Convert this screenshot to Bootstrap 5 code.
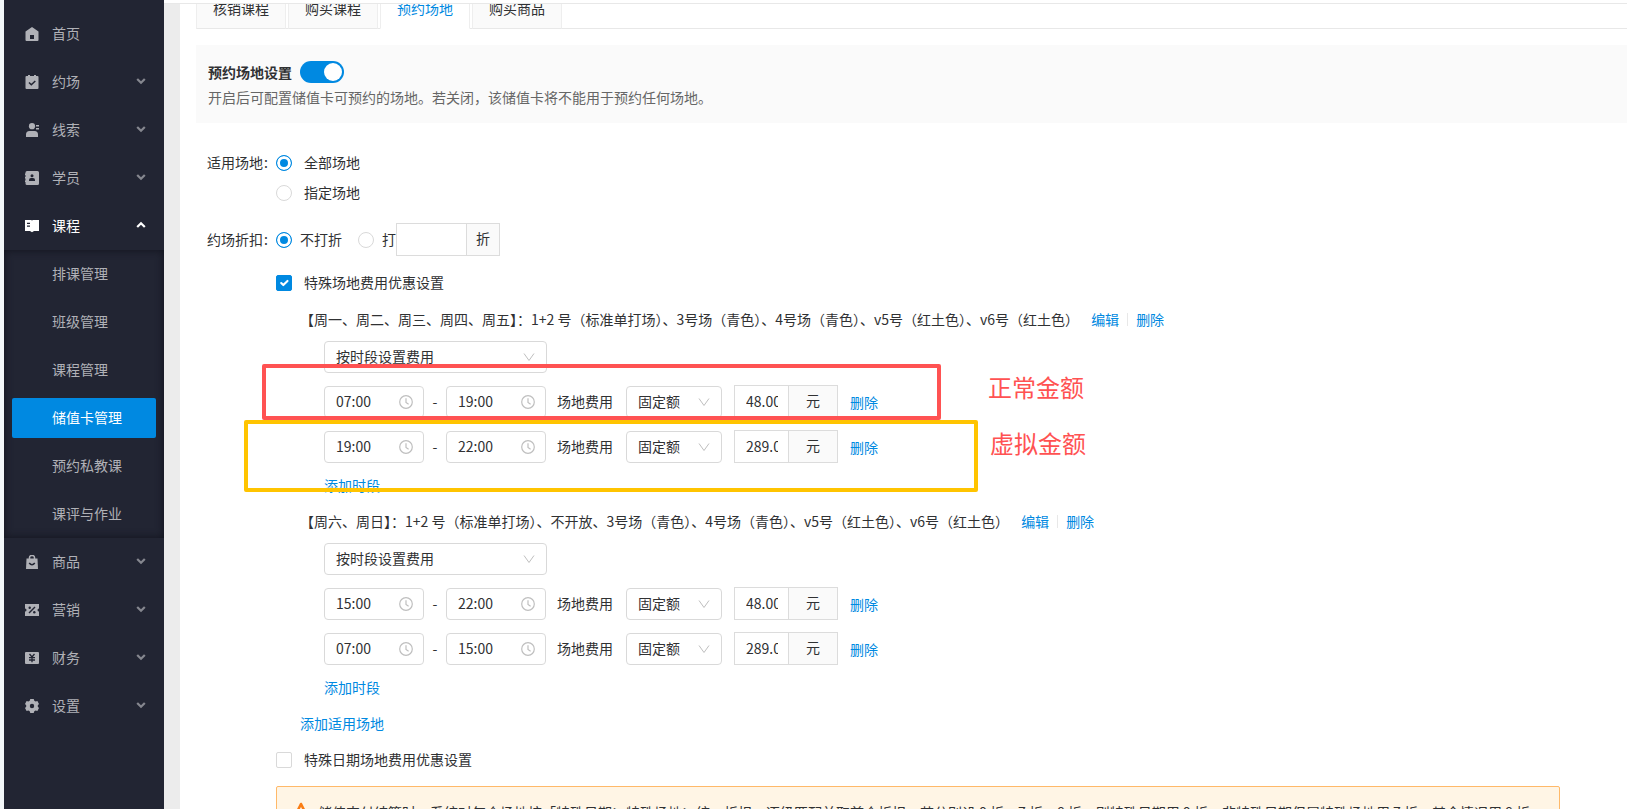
<!DOCTYPE html>
<html lang="zh-CN">
<head>
<meta charset="utf-8">
<meta name="viewport" content="width=device-width, initial-scale=1">
<title>储值卡管理</title>
<link href="https://cdn.jsdelivr.net/npm/bootstrap@5.3.0/dist/css/bootstrap.min.css" rel="stylesheet">
<style>
  :root { --brand: #0089e1; --line: #d9d9d9; --ink: #303133; }
  body { font: 14px/22px "Noto Sans CJK SC", sans-serif; color: var(--ink); background: #f3f7f9; padding-left: 4px; height: 100vh; overflow: hidden; }
  a { color: var(--brand); text-decoration: none; }
  /* sidebar */
  .side { width: 160px; background: #222533; padding-top: 10px; }
  .side a { height: 48px; padding: 0 18px 2px 21px; gap: 13px; color: #b0b1b7; }
  .side a.open { color: #fff; }
  .side .ico { width: 14px; height: 14px; margin-top: 2px; }
  .side .chev { width: 10px; height: 8px; margin-left: auto; opacity: .7; }
  .side .open .chev { opacity: 1; }
  .side .submenu { box-shadow: inset 0 0 8px #11131d; }
  .side .submenu a { padding-left: 48px; }
  .side .submenu a.on { height: 40px; margin: 4px 8px; padding-left: 40px; border-radius: 2px; background: var(--brand); color: #fff; }
  /* content frame */
  .frame { background: #ececec; padding-left: 16px; border-top: 1px solid #e8e8e8; overflow: hidden; }
  .topline { height: 3px; background: #fff; }
  .page { display: flow-root; background: #fff; padding-left: 16px; height: 100%; }
  .tabs { margin-top: -15px; height: 40px; gap: 2px; border-bottom: 1px solid #e8e8e8; }
  .tabs .nav-link { height: 40px; padding: 8px 16px; line-height: 20px; border: 1px solid #eee; border-bottom-color: #e8e8e8; background: #fafafa; color: var(--ink); border-radius: 4px 4px 0 0; }
  .tabs .nav-link.active { background: #fff; color: var(--brand); border-bottom-color: #fff; }
  .notice { margin-top: 16px; padding: 16px 12px 15px; background: #fafafa; }
  .notice p { margin: 3px 0 0; color: #666; }
  .notice .form-check-input { width: 44px; height: 22px; margin: 0 0 0 8px; border: 0; border-radius: 11px; background-color: var(--brand); background-size: 22px 22px; background-repeat: no-repeat; background-position: right center;
    background-image: url("data:image/svg+xml,%3csvg xmlns='http://www.w3.org/2000/svg' viewBox='0 0 22 22'%3e%3ccircle cx='11' cy='11' r='9' fill='white'/%3e%3c/svg%3e"); }
  /* form */
  .fields { padding-left: 11px; margin-top: 25px; }
  .fields label, .lab, .dash { padding-bottom: 2px; }
  .lab { width: 69px; flex: none; }
  .lab i { font-style: normal; margin-left: 1px; }
  .tick { width: 16px; height: 16px; margin: 0; flex: none; border-color: var(--line); background-color: #fff; }
  .tick[type=radio]:checked { border-color: var(--brand); background: var(--brand); box-shadow: inset 0 0 0 3px #fff; }
  .tick[type=checkbox] { border-radius: 2px; }
  .tick[type=checkbox]:checked { border-color: var(--brand); background-color: var(--brand); }
  .opt { height: 30px; gap: 12px; }
  .disc { height: 33px; margin: 15px 0; }
  .body-col { padding-left: 69px; }
  .ctl { height: 32px; padding: 0 11px 2px; border: 1px solid var(--line); border-radius: 4px; font-size: 14px; line-height: 28px; color: var(--ink); background-repeat: no-repeat; background-color: #fff; appearance: none; }
  select.ctl { background-size: 12px 12px; background-position: right 11px center;
    background-image: url("data:image/svg+xml,%3csvg xmlns='http://www.w3.org/2000/svg' viewBox='0 0 12 12'%3e%3cpath d='M1 2.5 6 9.5 11 2.5' fill='none' stroke='%23bfbfbf'/%3e%3c/svg%3e"); }
  .mode { width: 223px; margin-top: 10px; }
  .kind { width: 96px; margin: 0 12px 0 13px; }
  .clock { width: 100px; background-size: 14px 14px; background-position: right 10px center;
    background-image: url("data:image/svg+xml,%3csvg xmlns='http://www.w3.org/2000/svg' viewBox='0 0 14 14'%3e%3cg fill='none' stroke='%23bfbfbf' stroke-width='1.2'%3e%3ccircle cx='7' cy='7' r='6.3'/%3e%3cpath d='M7 3.2V7.5L9.6 9.2'/%3e%3c/g%3e%3c/svg%3e"); }
  .dash { width: 22px; text-align: center; }
  .cost { margin-left: 11px; padding-bottom: 2px; }
  .amount { width: 104px; height: 33px; border: 1px solid #dcdcdc; }
  .amount input { flex: 1; min-width: 0; height: 31px; padding: 0 10px 2px 11px; border: 0; color: var(--ink); }
  .amount span { width: 49px; line-height: 29px; text-align: center; background: #fafafa; border-left: 1px solid #dcdcdc; }
  .amount.rate span { width: 33px; }
  .grp { padding-left: 24px; position: relative; }
  .grp-h { margin-top: 13px; padding-bottom: 1px; }
  .grp + .grp .grp-h { margin-top: 14px; }
  .names { margin-right: 12px; }
  .pad { padding-left: 24px; }
  .slot { height: 33px; margin-top: 12px; }
  .more { margin-top: 11px; }
  .gap-t { margin-top: 14px; }
  .vbar { width: 1px; height: 13px; background: #e8e8e8; margin: 0 8px; }
  .warn { margin: 14px 67px 0 0; padding: 14px 10px 14px 17px; gap: 10px; border: 1px solid #ffb969; border-radius: 2px; background: #fff5e5; }
  /* marks drawn over the form */
  .box { position: absolute; pointer-events: none; border: 4px solid; border-radius: 2px; }
  .box-r { left: -14px; top: 56px; width: 679px; height: 56px; border-color: #ff5252; }
  .box-y { left: -32px; top: 112px; width: 734px; height: 72px; border-color: #ffc400; }
  .say { position: absolute; font-size: 24px; line-height: 32px; color: #ff5252; white-space: nowrap; }
  .say-r { left: 712px; top: 63px; }
  .say-y { left: 714px; top: 119px; }
</style>
</head>
<body>
<svg class="d-none">
  <symbol id="down" viewBox="0 0 10 8"><path d="M1.2 2 5 5.8 8.8 2" fill="none" stroke="currentColor" stroke-width="2.2"/></symbol>
  <symbol id="up" viewBox="0 0 10 8"><path d="M1.2 6 5 2.2 8.8 6" fill="none" stroke="currentColor" stroke-width="2.2"/></symbol>
</svg>
<div class="d-flex h-100">
  <nav class="side flex-shrink-0">
    <a href="#" class="d-flex align-items-center"><svg class="ico" viewBox="0 0 14 14" fill="currentColor" fill-rule="evenodd"><path d="M7 0 13.500 4.600V13a1 1 0 0 1-1 1h-11a1 1 0 0 1-1-1V4.600ZM5 8v4h4V8Z"/></svg>首页</a>
    <a href="#" class="d-flex align-items-center"><svg class="ico" viewBox="0 0 14 14"><path d="M2 1h1V0h2v1h4V0h2v1h1.500a1 1 0 0 1 1 1v11a1 1 0 0 1-1 1h-11a1 1 0 0 1-1-1V2a1 1 0 0 1 1-1Z" fill="currentColor"/><path d="m4 7.500 2.300 2.300L10.300 6" fill="none" stroke="#222533" stroke-width="1.500"/></svg>约场<svg class="chev"><use href="#down"/></svg></a>
    <a href="#" class="d-flex align-items-center"><svg class="ico" viewBox="0 0 14 14" fill="currentColor"><circle cx="7" cy="3.200" r="3.100"/><path d="M1 14v-2.500Q1 8 4.500 8h5Q13 8 13 11.500V14ZM11 2h3v1.500h-3ZM11 5h3v1.500h-3Z"/></svg>线索<svg class="chev"><use href="#down"/></svg></a>
    <a href="#" class="d-flex align-items-center"><svg class="ico" viewBox="0 0 14 14"><path d="M2 0h10.500A1.500 1.500 0 0 1 14 1.500v11a1.500 1.500 0 0 1-1.500 1.500H2a1.500 1.500 0 0 1-1.500-1.500V11H0V9.500h.5v-2H0V6h.5V4H0V2.500h.5v-1A1.500 1.500 0 0 1 2 0Z" fill="currentColor"/><circle cx="7" cy="4.800" r="1.500" fill="#222533"/><path d="M4 10V9q0-2 2-2h2q2 0 2 2v1Z" fill="#222533"/></svg>学员<svg class="chev"><use href="#down"/></svg></a>
    <a href="#" class="d-flex align-items-center open"><svg class="ico" viewBox="0 0 14 14"><path d="M0 1h6l1 .6L8 1h6v11H9l-2 1.200L5 12H0Z" fill="currentColor"/><path d="M2 3.700h3v1.300H2ZM2 6.500h3v1.300H2Z" fill="#222533"/></svg>课程<svg class="chev"><use href="#up"/></svg></a>
    <div class="submenu">
      <a href="#" class="d-flex align-items-center">排课管理</a>
      <a href="#" class="d-flex align-items-center">班级管理</a>
      <a href="#" class="d-flex align-items-center">课程管理</a>
      <a href="#" class="d-flex align-items-center on">储值卡管理</a>
      <a href="#" class="d-flex align-items-center">预约私教课</a>
      <a href="#" class="d-flex align-items-center">课评与作业</a>
    </div>
    <a href="#" class="d-flex align-items-center"><svg class="ico" viewBox="0 0 14 14"><path d="M4.500 4V2.500a2.500 2 0 0 1 5 0V4" fill="none" stroke="currentColor" stroke-width="1.500"/><path d="M1.500 3.500h11L13 14H1Z" fill="currentColor"/><path d="M4.200 8q2.800 3.400 5.600 0" fill="none" stroke="#222533" stroke-width="1.500"/></svg>商品<svg class="chev"><use href="#down"/></svg></a>
    <a href="#" class="d-flex align-items-center"><svg class="ico" viewBox="0 0 14 14"><path d="M0 1h14v4.500a1.500 1.500 0 0 0 0 3V13H0V8.500a1.500 1.500 0 0 0 0-3Z" fill="currentColor"/><path d="m4 10 6-6" stroke="#222533" stroke-width="1.400"/><circle cx="4.700" cy="4.700" r="1.200" fill="#222533"/><circle cx="9.300" cy="9.300" r="1.200" fill="#222533"/></svg>营销<svg class="chev"><use href="#down"/></svg></a>
    <a href="#" class="d-flex align-items-center"><svg class="ico" viewBox="0 0 14 14"><rect y="1" width="14" height="12" rx="1" fill="currentColor"/><path d="M4.500 3 7 6l2.500-3M7 6v5.200M4 6.600h6M4 9h6" fill="none" stroke="#222533" stroke-width="1.300"/></svg>财务<svg class="chev"><use href="#down"/></svg></a>
    <a href="#" class="d-flex align-items-center"><svg class="ico" viewBox="0 0 14 14"><path fill-rule="evenodd" fill="currentColor" d="M5.300 0h3.400l.6 1.700 1.300.8 1.800-.4L14 5l-1.200 1.300v1.400L14 9l-1.600 2.900-1.800-.4-1.300.8L8.700 14H5.300l-.6-1.700-1.300-.8-1.800.4L0 9l1.200-1.300V6.300L0 5l1.600-2.900 1.800.4 1.300-.8ZM7 4.800a2.200 2.200 0 1 0 0 4.400 2.200 2.200 0 0 0 0-4.400Z"/></svg>设置<svg class="chev"><use href="#down"/></svg></a>
  </nav>
  <div class="flex-grow-1 d-flex flex-column overflow-hidden">
    <div class="topline flex-shrink-0"></div>
    <div class="frame flex-grow-1">
      <main class="page">
        <div class="tabs nav">
          <a class="nav-link" href="#">核销课程</a>
          <a class="nav-link" href="#">购买课程</a>
          <a class="nav-link active" href="#">预约场地</a>
          <a class="nav-link" href="#">购买商品</a>
        </div>
        <section class="notice">
          <div class="d-flex align-items-center"><label for="sw" class="fw-bold">预约场地设置</label><input id="sw" class="form-check-input" type="checkbox" role="switch" checked></div>
          <p>开启后可配置储值卡可预约的场地。若关闭，该储值卡将不能用于预约任何场地。</p>
        </section>
        <form class="fields">
          <div class="d-flex">
            <div class="lab opt d-flex align-items-center gap-0">适用场地<i>:</i></div>
            <div>
              <div class="opt d-flex align-items-center"><input class="form-check-input tick" type="radio" name="site" id="s1" checked><label for="s1">全部场地</label></div>
              <div class="opt d-flex align-items-center"><input class="form-check-input tick" type="radio" name="site" id="s2"><label for="s2">指定场地</label></div>
            </div>
          </div>
          <div class="disc d-flex align-items-center">
            <div class="lab">约场折扣<i>:</i></div>
            <input class="form-check-input tick" type="radio" name="rate" id="r1" checked><label for="r1" class="ms-2 me-3">不打折</label>
            <input class="form-check-input tick" type="radio" name="rate" id="r2"><label for="r2" class="ms-2">打</label>
            <div class="amount rate d-flex"><input type="text" aria-label="折扣"><span>折</span></div>
          </div>
          <div class="body-col">
            <div class="d-flex align-items-center"><input class="form-check-input tick me-2" type="checkbox" id="c1" checked><label for="c1" class="ms-1">特殊场地费用优惠设置</label></div>
            <div class="grp">
              <div class="grp-h d-flex align-items-center"><span class="names">【周一、周二、周三、周四、周五】：1+2 号（标准单打场）、3号场（青色）、4号场（青色）、v5号（红土色）、v6号（红土色）</span><a href="#">编辑</a><i class="vbar"></i><a href="#">删除</a></div>
              <div class="pad">
                <select class="ctl mode d-block" aria-label="费用方式"><option>按时段设置费用</option></select>
                <div class="slot d-flex align-items-center"><input class="ctl clock" type="text" value="07:00" aria-label="开始"><span class="dash">-</span><input class="ctl clock" type="text" value="19:00" aria-label="结束"><span class="cost">场地费用</span><select class="ctl kind" aria-label="类型"><option>固定额</option></select><div class="amount d-flex me-2"><input type="text" value="48.00" aria-label="金额"><span>元</span></div><a href="#" class="ms-1">删除</a></div>
                <div class="slot d-flex align-items-center"><input class="ctl clock" type="text" value="19:00" aria-label="开始"><span class="dash">-</span><input class="ctl clock" type="text" value="22:00" aria-label="结束"><span class="cost">场地费用</span><select class="ctl kind" aria-label="类型"><option>固定额</option></select><div class="amount d-flex me-2"><input type="text" value="289.00" aria-label="金额"><span>元</span></div><a href="#" class="ms-1">删除</a></div>
                <a href="#" class="d-table more">添加时段</a>
              </div>
              <div class="box box-r"></div><div class="box box-y"></div>
              <div class="say say-r">正常金额</div><div class="say say-y">虚拟金额</div>
            </div>
            <div class="grp">
              <div class="grp-h d-flex align-items-center"><span class="names">【周六、周日】：1+2 号（标准单打场）、不开放、3号场（青色）、4号场（青色）、v5号（红土色）、v6号（红土色）</span><a href="#">编辑</a><i class="vbar"></i><a href="#">删除</a></div>
              <div class="pad">
                <select class="ctl mode d-block" aria-label="费用方式"><option>按时段设置费用</option></select>
                <div class="slot d-flex align-items-center"><input class="ctl clock" type="text" value="15:00" aria-label="开始"><span class="dash">-</span><input class="ctl clock" type="text" value="22:00" aria-label="结束"><span class="cost">场地费用</span><select class="ctl kind" aria-label="类型"><option>固定额</option></select><div class="amount d-flex me-2"><input type="text" value="48.00" aria-label="金额"><span>元</span></div><a href="#" class="ms-1">删除</a></div>
                <div class="slot d-flex align-items-center"><input class="ctl clock" type="text" value="07:00" aria-label="开始"><span class="dash">-</span><input class="ctl clock" type="text" value="15:00" aria-label="结束"><span class="cost">场地费用</span><select class="ctl kind" aria-label="类型"><option>固定额</option></select><div class="amount d-flex me-2"><input type="text" value="289.00" aria-label="金额"><span>元</span></div><a href="#" class="ms-1">删除</a></div>
                <a href="#" class="d-table more">添加时段</a>
              </div>
            </div>
            <a href="#" class="d-table ms-4 gap-t">添加适用场地</a>
            <div class="d-flex align-items-center gap-t"><input class="form-check-input tick me-2" type="checkbox" id="c2"><label for="c2" class="ms-1">特殊日期场地费用优惠设置</label></div>
            <div class="warn d-flex"><svg width="14" height="22" viewBox="0 0 14 22" class="flex-shrink-0"><path d="M7 3 12.500 14H1.500Z" fill="none" stroke="#fa7d14" stroke-width="2.600" stroke-linejoin="round"/></svg><span>储值支付结算时，系统对每个场地按「特殊日期＞特殊场地＞统一折扣」逐级匹配并取首个折扣；若分别设 9 折、7 折、8 折，则特殊日期用 9 折，非特殊日期但属特殊场地用 7 折，其余情况用 8 折。</span></div>
          </div>
        </form>
      </main>
    </div>
  </div>
</div>
<script src="https://cdn.jsdelivr.net/npm/bootstrap@5.3.0/dist/js/bootstrap.bundle.min.js"></script>
</body>
</html>
